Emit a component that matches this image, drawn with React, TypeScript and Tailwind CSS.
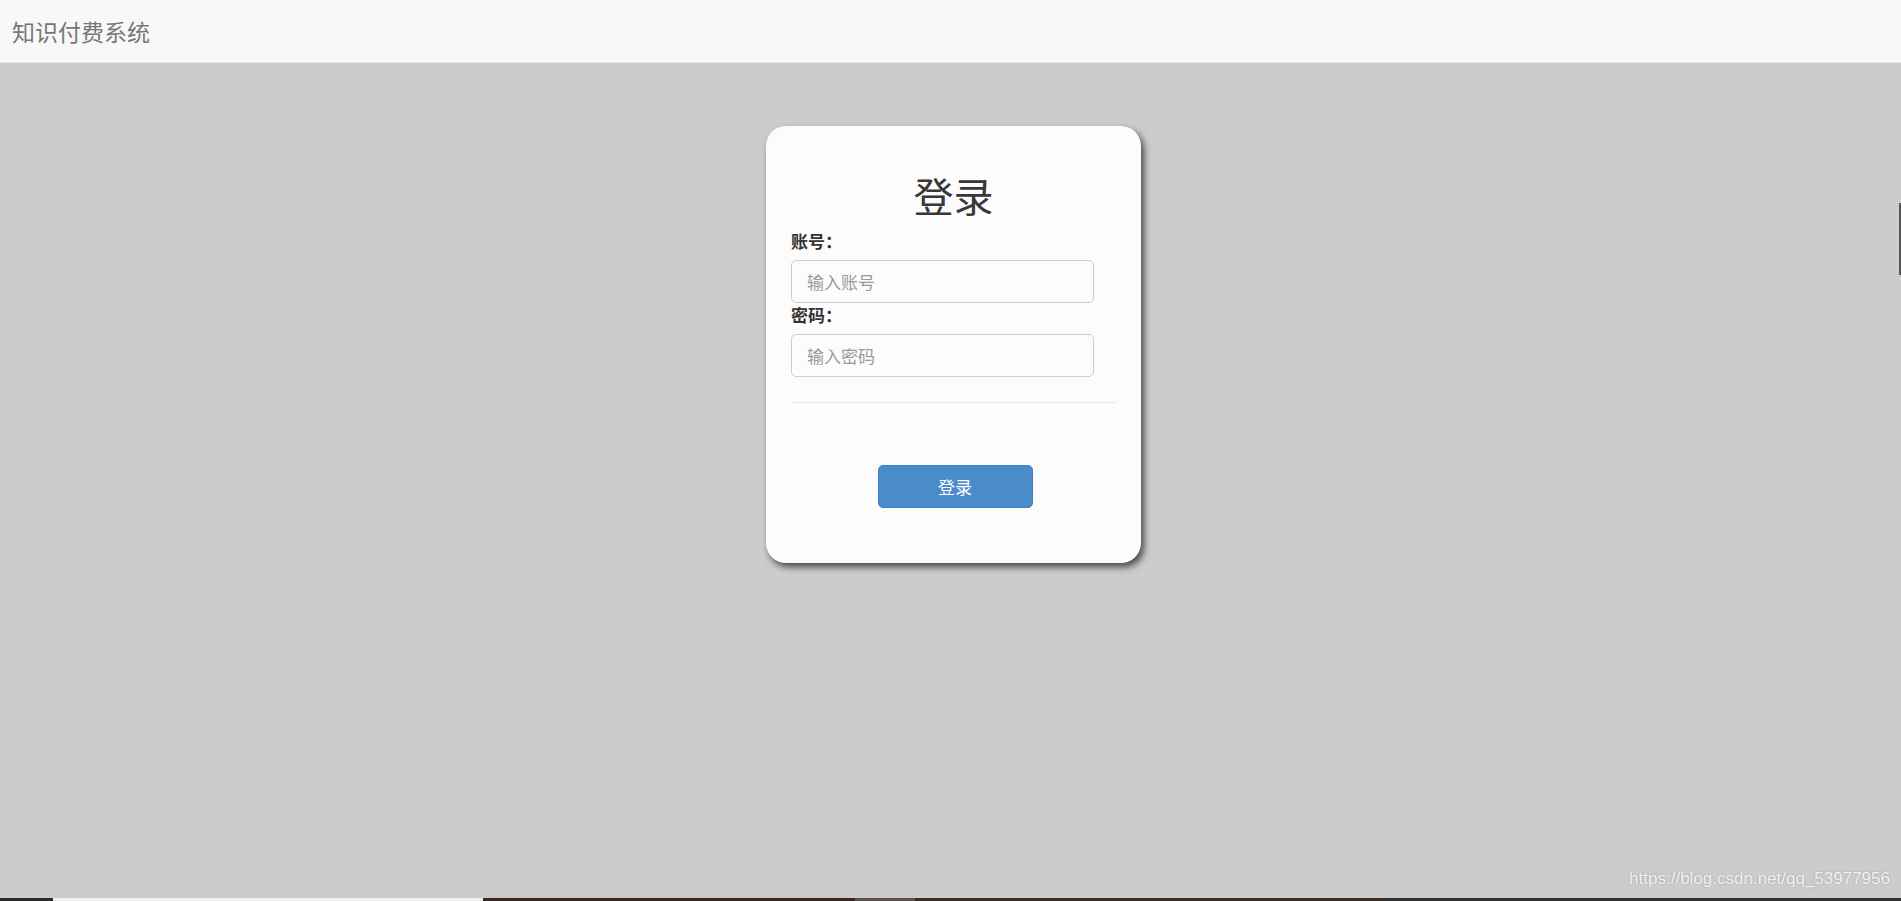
import React from "react";

const font = { fontFamily: '"Noto Sans CJK SC", "Noto Sans", sans-serif' };

export default function App() {
  return (
    <div className="relative flex h-[901px] w-full flex-col overflow-hidden text-[#333]" style={font}>
      {/* top navbar */}
      <div className="flex h-[63px] shrink-0 items-center border-b border-[#e7e7e7] bg-[#f8f8f8] pl-[12px]">
        <span className="text-[23px] leading-none text-[#777]">知识付费系统</span>
      </div>

      {/* page body */}
      <div className="flex-1 bg-[#cccccc] pt-[63px]">
        <div className="ml-[766px] w-[375px] rounded-[20px] bg-[#fcfcfc] px-[25px] pt-[45px] pb-[55px] shadow-[3px_4px_7px_rgba(0,0,0,0.65)]">
          <h1 className="text-center text-[40px] leading-[48px] font-normal text-[#383838]">登录</h1>

          <div className="mt-[10px]">
            <label className="block text-[17px] leading-[24px] font-bold">账号：</label>
            <input
              className="mt-[7px] block h-[43px] w-[303px] rounded-[5px] border border-[#cccccc] bg-[#fcfcfc] pl-[15px] text-[17px] outline-none placeholder:text-[#999]"
              placeholder="输入账号"
            />
            <label className="block text-[17px] leading-[24px] font-bold">密码：</label>
            <input
              type="password"
              className="mt-[7px] block h-[43px] w-[303px] rounded-[5px] border border-[#cccccc] bg-[#fcfcfc] pl-[15px] text-[17px] outline-none placeholder:text-[#999]"
              placeholder="输入密码"
            />
          </div>

          <div className="mt-[25px] border-t border-[#e8e8e8]" />

          <div className="mt-[62px] flex justify-center">
            <button className="ml-[3px] h-[43px] w-[155px] rounded-[5px] border border-[#3f80c0] bg-[#4a8cca] text-[17px] text-white">
              登录
            </button>
          </div>
        </div>
      </div>

      {/* bottom taskbar sliver */}
      <div className="flex h-[3px] shrink-0">
        <div className="w-[53px] bg-[#2a2a2a]" />
        <div className="w-[430px] bg-[#eeeeee]" />
        <div className="w-[372px] bg-[#3b2624]" />
        <div className="w-[60px] bg-[#5e4f4f]" />
        <div className="w-[468px] bg-[#3e2a26]" />
        <div className="flex-1 bg-[#333333]" />
      </div>

      {/* edge marker */}
      <div className="absolute top-[203px] right-0 h-[72px] w-[2px] bg-[#555]" />

      {/* watermark */}
      <div
        className="absolute right-[11px] bottom-[10px] text-[17px] text-[#f2f2f2] [text-shadow:0_0_2px_rgba(0,0,0,0.25)]"
        style={{ fontFamily: '"Liberation Sans", Arial, sans-serif' }}
      >
        https://blog.csdn.net/qq_53977956
      </div>
    </div>
  );
}
